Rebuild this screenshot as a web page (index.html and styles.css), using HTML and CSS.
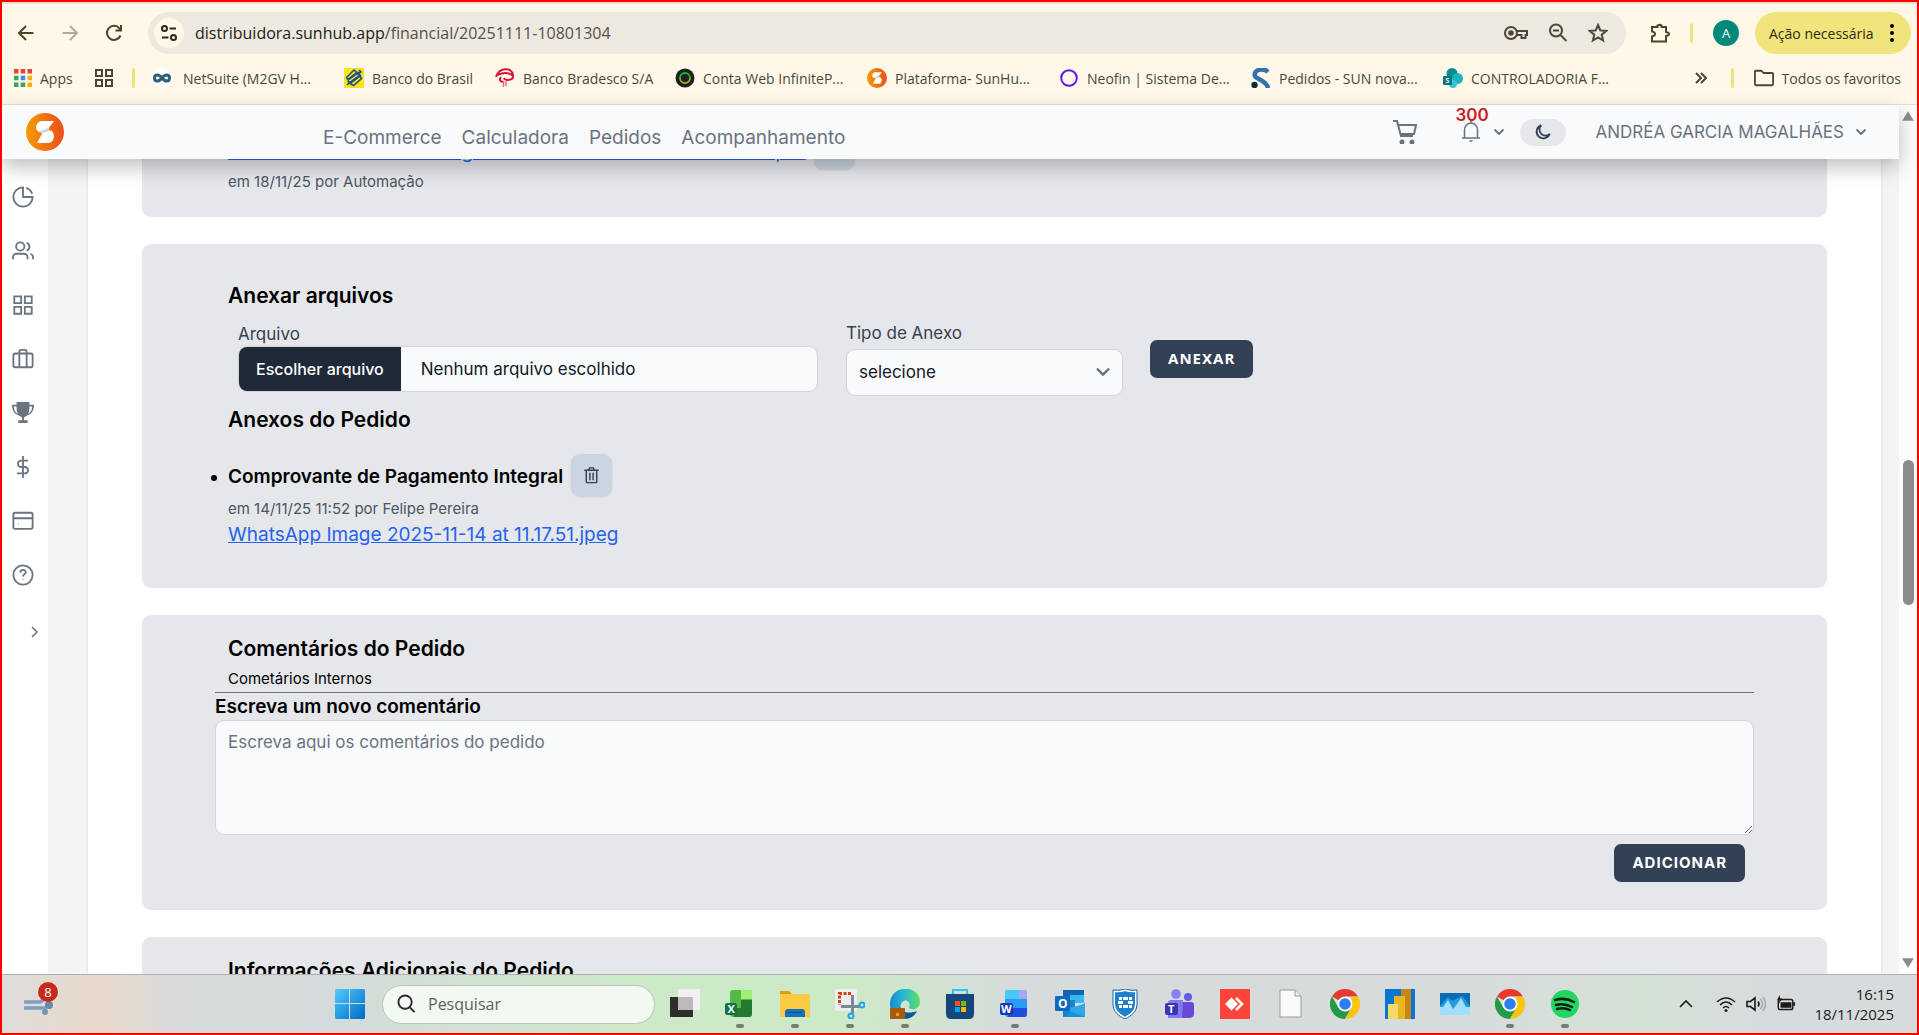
FILE: index.html
```html
<!DOCTYPE html>
<html lang="pt-BR">
<head>
  <meta charset="UTF-8">
  <meta name="viewport" content="width=device-width, initial-scale=1.0">
  <title>SunHub - Financeiro</title>
  <link rel="stylesheet" href="styles.css">
</head>
<body>
  <!-- Símbolos reutilizados -->
  <svg class="symbols" aria-hidden="true">
    <symbol id="i-chevron" viewBox="0 0 12 12"><path d="M2 4l4 4 4-4" fill="none" stroke="currentColor" stroke-width="1.8" stroke-linecap="round" stroke-linejoin="round"/></symbol>
    <symbol id="i-sun" viewBox="0 0 38 38">
      <defs><linearGradient id="sun-g"><stop offset="0" stop-color="#f59a00"/><stop offset="1" stop-color="#ea4f1d"/></linearGradient></defs>
      <circle cx="19" cy="19" r="19" fill="url(#sun-g)"/>
      <path d="M15 8h13l-8 11h-6c-5 0-6-9 1-11z" fill="#fff"/>
      <path d="M18 17h5c7 1 6 12 0 13H11z" fill="#fff"/>
      <path d="M22 15l-10 4 4 1 8-2z" fill="#d5d4e8"/>
    </symbol>
    <symbol id="i-chrome" viewBox="0 0 30 30">
      <path d="M15 15L2 7.500A15 15 0 0 1 28 7.500H15z" fill="#e33b2e"/>
      <path d="M2 7.500A15 15 0 0 0 15 30L21.500 18.750 15 15 8.500 18.750z" fill="#249a48"/>
      <path d="M28 7.500A15 15 0 0 1 15 30L21.500 18.750 21.500 7.500z" fill="#fdc40d"/>
      <circle cx="15" cy="15" r="7.500" fill="#fff"/><circle cx="15" cy="15" r="5.800" fill="#2f7cf0"/>
    </symbol>
    <symbol id="i-trash" viewBox="0 0 20 20"><path d="M3 5h14M7 5l1-2.500h4L13 5M4.500 5v12q0 1 1 1h9q1 0 1-1V5M8.300 8v7M11.700 8v7" fill="none" stroke="currentColor" stroke-width="1.500" stroke-linecap="round"/></symbol>
  </svg>

  <!-- Barra do navegador -->
  <header class="browser">
    <div class="toolbar">
      <button class="tool" aria-label="Voltar"><svg viewBox="0 0 20 20"><path d="M17.500 10H3M10 3l-7 7 7 7"/></svg></button>
      <button class="tool off" aria-label="Avançar"><svg viewBox="0 0 20 20"><path d="M2.500 10H17M10 3l7 7-7 7"/></svg></button>
      <button class="tool" aria-label="Recarregar"><svg viewBox="0 0 20 20"><path d="M16.500 12.500A7 7 0 1 1 15.500 5.500L17 7M17 2v5.500h-5.500"/></svg></button>
      <div class="omnibox">
        <span class="site"><svg viewBox="0 0 20 20"><circle cx="5.500" cy="5.500" r="2.500"/><path d="M10.500 5.500H17M3 14.500h6.500"/><circle cx="14.500" cy="14.500" r="2.500"/></svg></span>
        <div class="url">distribuidora.sunhub.app<span>/financial/20251111-10801304</span></div>
        <svg class="omni-icon wide" viewBox="0 0 24 20"><circle cx="7" cy="10" r="6"/><circle class="fill" cx="7" cy="10" r="1.800"/><path d="M13 8h10v4h-1.500v3h-4v-3H12.500"/></svg>
        <svg class="omni-icon" viewBox="0 0 20 20"><circle cx="8" cy="7.500" r="6"/><path d="M5 7.500h6M12.500 12l6 6"/></svg>
        <svg class="omni-icon" viewBox="0 0 20 20"><path d="M10 2l2.300 5.400 5.900.5-4.500 3.800 1.400 5.800L10 14.400l-5.100 3.100 1.400-5.800-4.500-3.800 5.900-.5z"/></svg>
      </div>
      <button class="tool ext" aria-label="Extensões"><svg viewBox="0 0 20 20"><path d="M2 4h5.500V2.500q2.500-1.500 4 0V4H16v5q3 .5 3 2t-3 2v5.500H2v-5q3-.5 3-2.500T2 8.500z"/></svg></button>
      <i class="sep"></i>
      <span class="avatar">A</span>
      <button class="update">Ação necessária <svg viewBox="0 0 4 20"><circle cx="2" cy="3" r="2"/><circle cx="2" cy="10" r="2"/><circle cx="2" cy="17" r="2"/></svg></button>
    </div>
    <nav class="bookmarks">
      <a href="#" class="apps"><svg viewBox="0 0 18 18"><path fill="#ea4335" d="M0 0h4.500v4.500H0zM6.700 0h4.500v4.500H6.700zM13.500 0H18v4.500h-4.500z"/><path fill="#34a853" d="M0 6.700h4.500v4.500H0zM0 13.500h4.500V18H0zM6.700 13.500h4.500V18H6.700z"/><path fill="#4285f4" d="M6.700 6.700h4.500v4.500H6.700z"/><path fill="#fbaf05" d="M13.500 6.700H18v4.500h-4.500zM13.500 13.500H18V18h-4.500z"/></svg>Apps</a>
      <svg class="grid-icon" viewBox="0 0 18 18"><path d="M1 1h6v6H1zM11 1h6v6h-6zM1 11h6v6H1zM11 11h6v6h-6z"/></svg>
      <i class="sep"></i>
      <a href="#" class="mark first"><svg viewBox="0 0 20 20"><circle cx="10" cy="10" r="10" fill="#fff"/><path d="M10 10C7 6 2.500 6 2.500 10s4.500 4 7.500 0 7.500-4 7.500 0-4.500 4-7.500 0z" fill="none" stroke="#2f5f7e" stroke-width="3"/></svg>NetSuite (M2GV H...</a>
      <a href="#" class="mark short"><svg viewBox="0 0 20 20"><path fill="#fbe122" d="M0 0h20v20H0z"/><path d="M10 2l3 2.500-9 7-1.500-2zM15 2l2 2-3 2M16 8l1.500 2.500-8 7L6 15.500zM3 17l2-2 11-8M4 12l11-8M3.500 13l3 2M13 5l4 3" fill="none" stroke="#1b5288" stroke-width="1.600"/></svg>Banco do Brasil</a>
      <a href="#" class="mark mid"><svg viewBox="0 0 20 20"><path d="M1 9C3 0 17-2 18 7c1 6-8 6-9 3M2 7c5-2 12-3 16 1M6 9c-3 4 1 5 3 5" fill="none" stroke="#d5163c" stroke-width="2"/><path d="M8.500 13v6M11 13v5" stroke="#e0708a" stroke-width="1.500"/></svg>Banco Bradesco S/A</a>
      <a href="#" class="mark"><svg viewBox="0 0 20 20"><circle cx="10" cy="10" r="9.500" fill="#1e1f1e"/><path d="M5 10a5 5 0 0 1 10 0" stroke="#10bd2d" fill="none" stroke-width="1.800"/><path d="M5 10a5 5 0 0 0 10 0" stroke="#9aae19" fill="none" stroke-width="1.800"/></svg>Conta Web InfiniteP...</a>
      <a href="#" class="mark"><svg viewBox="0 0 38 38"><use href="#i-sun"/></svg>Plataforma- SunHu...</a>
      <a href="#" class="mark"><svg viewBox="0 0 20 20"><circle cx="10" cy="10" r="7.800" fill="none" stroke="#6516ef" stroke-width="2"/></svg>Neofin | Sistema De...</a>
      <a href="#" class="mark"><svg viewBox="0 0 20 20"><path d="M17 4C12-1 2 2 4 8c1 3 12 5 13 12" fill="none" stroke="#3472ac" stroke-width="4.500"/><circle cx="3.500" cy="17" r="3.200" fill="#0a2748"/></svg>Pedidos - SUN nova...</a>
      <a href="#" class="mark"><svg viewBox="0 0 20 20"><circle cx="9" cy="5.500" r="5.500" fill="#0b8c95"/><circle cx="14.500" cy="10.500" r="5.500" fill="#1bb5be"/><circle cx="10" cy="16" r="4" fill="#37c6d0"/><rect y="8" width="9" height="9" rx="1" fill="#037680"/><text x="2.500" y="15" font-size="7" font-weight="700" fill="#fff">S</text></svg>CONTROLADORIA F...</a>
      <button class="more" aria-label="Mais favoritos"><svg viewBox="0 0 12 12"><path d="M1 1l5 5-5 5M6 1l5 5-5 5"/></svg></button>
      <i class="sep"></i>
      <a href="#" class="folder"><svg viewBox="0 0 22 18"><path d="M1 16V2q0-1 1-1h6l2.500 2.500H20q1 0 1 1V16q0 1-1 1H2q-1 0-1-1z" fill="none" stroke="#4b4738" stroke-width="2"/></svg>Todos os favoritos</a>
    </nav>
  </header>

  <div class="viewport">
    <div class="app">
      <!-- Cabeçalho do sistema -->
      <header class="app-header">
        <a href="#" class="logo" aria-label="SunHub"><svg viewBox="0 0 38 38"><use href="#i-sun"/></svg></a>
        <nav class="menu">
          <a href="#">E-Commerce</a>
          <a href="#">Calculadora</a>
          <a href="#">Pedidos</a>
          <a href="#">Acompanhamento</a>
        </nav>
        <button class="cart" aria-label="Carrinho"><svg viewBox="0 0 24 24"><path d="M0 1h4l4 15h12M5 5h18l-2 9H7"/><circle class="fill" cx="9" cy="22" r="1.500"/><circle class="fill" cx="19" cy="22" r="1.500"/></svg></button>
        <button class="bell" aria-label="Notificações">
          <span class="count">300</span>
          <svg viewBox="0 0 20 22"><path d="M1 17h18M3.500 17V9a6.500 7 0 0 1 13 0v8M10 2V0M8.500 20h3"/></svg>
          <svg class="chev" viewBox="0 0 12 12"><use href="#i-chevron"/></svg>
        </button>
        <button class="theme" aria-label="Tema escuro"><svg viewBox="0 0 20 20"><path d="M8 2.500A7.500 7.500 0 1 0 17.500 12 6.500 6.500 0 0 1 8 2.500z"/></svg></button>
        <button class="user">ANDRÉA GARCIA MAGALHÃES <svg class="chev" viewBox="0 0 12 12"><use href="#i-chevron"/></svg></button>
      </header>

      <div class="app-body">
        <aside class="sidebar">
          <a href="#" aria-label="Painel"><svg viewBox="0 0 24 24"><path d="M12 1.500A10.500 10.500 0 1 0 22.500 12H12zM15.500 2a10.500 10.500 0 0 1 6.500 6.500"/></svg></a>
          <a href="#" aria-label="Clientes"><svg viewBox="0 0 24 24"><circle cx="9" cy="7" r="4.500"/><path d="M1 21v-2a4 4 0 0 1 4-4h8a4 4 0 0 1 4 4v2M16 3a4.500 4.500 0 0 1 0 8.500M20 15q3 1 3 4v2"/></svg></a>
          <a href="#" aria-label="Módulos"><svg viewBox="0 0 24 24"><path d="M2.500 2.500h7.500v7.500H2.500zM14 2.500h7.500v7.500H14zM2.500 14h7.500v7.500H2.500zM14 14h7.500v7.500H14z"/></svg></a>
          <a href="#" aria-label="Negócios"><svg viewBox="0 0 24 24"><rect x="1.500" y="6" width="21" height="15" rx="2"/><path d="M8 21V4q0-2 2-2h4q2 0 2 2v17"/></svg></a>
          <a href="#" aria-label="Ranking"><svg viewBox="0 0 24 24"><path class="fill" d="M5 0h14v3h5c0 7-3 10-8 12-1 1-2.500 1.500-3 2v3h4v3H7v-3h4v-3c-.5-.5-2-1-3-2C3 13 0 10 0 3h5zM2 5c0 4 2 7 4.500 8C5 10 5 8 5 5zm20 0h-3c0 3 0 5-1.500 8C20 12 22 9 22 5z" stroke="none"/></svg></a>
          <a href="#" aria-label="Financeiro"><svg viewBox="0 0 24 24"><path d="M12 0v24M17.500 5H10a3.500 3.500 0 0 0 0 7h4a3.500 3.500 0 0 1 0 7H5.500"/></svg></a>
          <a href="#" aria-label="Pagamentos"><svg viewBox="0 0 24 24"><rect x="1.500" y="3" width="21" height="17.500" rx="2"/><path d="M1.500 9h21M6.500 15h.5"/></svg></a>
          <a href="#" aria-label="Ajuda"><svg viewBox="0 0 24 24"><circle cx="12" cy="12" r="10.500"/><path d="M9 9.500c0-4 6-4 6-.5 0 2.500-3 2-3 4.500M12 17v.5"/></svg></a>
          <button class="expand" aria-label="Expandir menu"><svg viewBox="0 0 12 12"><path d="M4 1l5 5-5 5"/></svg></button>
        </aside>

        <main class="content">
          <section class="card previous">
            <div class="attachment-line">
              <a href="#" class="file-link">Nota Fiscal Eletronica Integral 20251111-10801304 Venda Sol.pdf</a>
              <button class="trash" aria-label="Excluir"><svg viewBox="0 0 20 20"><use href="#i-trash"/></svg></button>
            </div>
            <p class="meta">em 18/11/25 por Automação</p>
          </section>

          <section class="card attach">
            <h3>Anexar arquivos</h3>
            <form class="attach-form">
              <div class="field file-field">
                <label for="arquivo">Arquivo</label>
                <label class="file-box" for="arquivo">
                  <span class="file-button">Escolher arquivo</span>
                  <span class="file-name">Nenhum arquivo escolhido</span>
                  <input type="file" id="arquivo">
                </label>
              </div>
              <div class="field type-field">
                <label for="tipo">Tipo de Anexo</label>
                <div class="select-box">
                  <select id="tipo"><option>selecione</option></select>
                  <svg viewBox="0 0 12 12"><use href="#i-chevron"/></svg>
                </div>
              </div>
              <button type="button" class="btn btn-attach">Anexar</button>
            </form>
            <h3>Anexos do Pedido</h3>
            <ul class="files">
              <li>
                <div class="attachment-line">
                  <strong>Comprovante de Pagamento Integral</strong>
                  <button class="trash" aria-label="Excluir"><svg viewBox="0 0 20 20"><use href="#i-trash"/></svg></button>
                </div>
                <p class="meta">em 14/11/25 11:52 por Felipe Pereira</p>
                <a href="#" class="file-link">WhatsApp Image 2025-11-14 at 11.17.51.jpeg</a>
              </li>
            </ul>
          </section>

          <section class="card comments">
            <h2>Comentários do Pedido</h2>
            <p class="sub">Cometários Internos</p>
            <div class="new-comment">
              <label for="comentario">Escreva um novo comentário</label>
              <textarea id="comentario" placeholder="Escreva aqui os comentários do pedido"></textarea>
              <button type="button" class="btn">Adicionar</button>
            </div>
          </section>

          <section class="card extra">
            <h2>Informações Adicionais do Pedido</h2>
          </section>
        </main>
      </div>
    </div>
    <!-- Barra de rolagem -->
    <div class="scrollbar">
      <svg viewBox="0 0 12 10"><path d="M6 1l5 8H1z"/></svg>
      <div class="track"><div class="thumb"></div></div>
      <svg viewBox="0 0 12 10"><path d="M6 9L1 1h10z"/></svg>
    </div>
  </div>

  <!-- Barra de tarefas -->
  <footer class="taskbar">
    <div class="weather">
      <svg viewBox="0 0 30 24"><path d="M1 10h15q4-1 2-6M1 16h20v4" fill="none" stroke="#7e9fc4" stroke-width="3.500" stroke-linecap="round"/><circle cx="25" cy="13" r="4" fill="#6689ae"/><circle cx="21" cy="20" r="3" fill="#7295b9"/></svg>
      <span class="badge">8</span>
    </div>
    <div class="tasks">
      <button class="task start" aria-label="Iniciar"><svg viewBox="0 0 30 30"><defs><linearGradient id="win" x2="1" y2="1"><stop stop-color="#4ccdfd"/><stop offset="1" stop-color="#0069c9"/></linearGradient></defs><path fill="url(#win)" d="M1 0h13v14H0V1zM15 0h14l1 1v13H15zM0 15h14v15H1l-1-1zM15 15h15v14l-1 1H15z"/></svg></button>
      <label class="search"><svg viewBox="0 0 20 20"><circle cx="8.500" cy="8" r="7"/><path d="M13.500 13.500l5 5"/></svg><input type="text" placeholder="Pesquisar" aria-label="Pesquisar"></label>
      <button class="task" aria-label="Visão de tarefas"><svg viewBox="0 0 30 30"><path fill="#302e2d" d="M0 8h23v20H0z"/><path fill="#f1f1f1" d="M8 0h22v21H8z"/><path fill="#bababa" d="M8 8h15v13H8z"/></svg></button>
      <button class="task on" aria-label="Excel"><svg viewBox="0 0 30 30"><rect x="5" y="1" width="22" height="27" rx="3" fill="#55b947"/><path fill="#a3ec75" d="M16 1h8q3 0 3 3v6H16z"/><path fill="#237a31" d="M16 11h11v14q0 3-3 3H9V19h7z"/><rect y="14" width="12" height="12" rx="2" fill="#107341"/><text x="2.500" y="24" font-size="11" font-weight="700" fill="#fff">X</text></svg></button>
      <button class="task on" aria-label="Explorador de arquivos"><svg viewBox="0 0 30 30"><path fill="#e19d05" d="M0 2h9l3 3h8v6H0z"/><rect y="5" width="30" height="23" rx="1" fill="#fdca43"/><path fill="#1173bd" d="M5 28v-5q0-3 3-3h14q3 0 3 3v5z"/><path fill="#07508a" d="M8 23h14v1H8z"/></svg></button>
      <button class="task on" aria-label="Captura"><svg viewBox="0 0 30 30"><rect width="22" height="22" rx="2" fill="#eeedf3"/><path d="M16 4.500H4.500V16" fill="none" stroke="#d4400d" stroke-width="3" stroke-dasharray="3 1.500"/><path d="M17.500 6v18M6 17.500h18" stroke="#7b8995" stroke-width="3"/><circle cx="27" cy="16" r="2.500" fill="none" stroke="#29a0e5" stroke-width="2"/><circle cx="16" cy="27" r="2.500" fill="none" stroke="#29a0e5" stroke-width="2"/></svg></button>
      <button class="task on" aria-label="Edge"><svg viewBox="0 0 30 30"><defs><linearGradient id="edge"><stop stop-color="#168bd1"/><stop offset=".5" stop-color="#2cbdcc"/><stop offset="1" stop-color="#5be05c"/></linearGradient></defs><path fill="url(#edge)" d="M0 15C0-5 30-5 30 13c0 7-8 9-11 6 3-9-8-11-9 0L6 28C2 25 0 20 0 15z"/><path fill="#0b559b" d="M10 16c0 8 9 9 17 6-4 9-14 9-19 6z"/><path fill="#a75c0e" d="M0 19h15v11H0z"/><path fill="#f0a21d" d="M6 24h3v3H6z"/></svg></button>
      <button class="task" aria-label="Store"><svg viewBox="0 0 30 30"><path d="M8 6V1h14v5" fill="none" stroke="#2fc0f4" stroke-width="2"/><path fill="#13477e" d="M1 5h28v20q0 5-5 5H6q-5 0-5-5z"/><path fill="#f25022" d="M10 12h5v5h-5z"/><path fill="#7fba00" d="M16 12h5v5h-5z"/><path fill="#00a4ef" d="M10 18h5v5h-5z"/><path fill="#ffb900" d="M16 18h5v5h-5z"/></svg></button>
      <button class="task on" aria-label="Word"><svg viewBox="0 0 30 30"><rect x="5" y="1" width="22" height="27" rx="3" fill="#2a9bf4"/><path fill="#45c8fb" d="M8 1h11v9H5V4q0-3 3-3z"/><path fill="#a8a5f5" d="M19 1h5q3 0 3 3v6h-8z"/><path fill="#1f4fe2" d="M8 19h19v6q0 3-3 3H8z"/><rect y="14" width="13" height="12" rx="2" fill="#173ab4"/><text x="1" y="24" font-size="11" font-weight="700" fill="#fff">W</text></svg></button>
      <button class="task" aria-label="Outlook"><svg viewBox="0 0 30 30"><path fill="#1066b5" d="M8 1h21v10H8z"/><path fill="#35b9f1" d="M15 6h14v8H15z"/><path fill="#1683d5" d="M8 11h12v17H8z"/><path fill="#1a92df" d="M8 28l22-14v14z"/><path fill="#31a7eb" d="M9 20l21 8V15z"/><rect y="7" width="15" height="15" rx="1" fill="#0f6cbd"/><text x="3" y="19" font-size="12" font-weight="700" fill="#fff">O</text></svg></button>
      <button class="task" aria-label="FortiClient"><svg viewBox="0 0 30 30"><path d="M15 1q6 2 11 1v13c0 7-5 11-11 14C9 26 4 22 4 15V2q5 1 11-1z" fill="#1c80d0" stroke="#fff" stroke-width="2"/><path d="M15 0q6 2 12 1v14c0 8-6 12-12 15C9 27 3 23 3 15V1q6 1 12-1z" fill="none" stroke="#1760a4"/><path fill="#fff" d="M9 8h3v3H9zM13 8h5v3h-5zM19 8h3v3h-3zM8 12h5v3H8zM18 12h5v3h-5zM9 16h3v3H9zM13 16h5v3h-5zM19 16h3v3h-3z"/></svg></button>
      <button class="task" aria-label="Teams"><svg viewBox="0 0 30 30"><circle cx="11" cy="5" r="4.800" fill="#8581f4"/><circle cx="23" cy="8" r="4" fill="#615bed"/><path fill="#827bf0" d="M3 29V14q0-3 3-3h12v18z"/><path fill="#6a49d9" d="M18 13h8q3 0 3 3v9q0 4-5 4h-7z"/><rect y="14" width="13" height="12" rx="2" fill="#3a36b2"/><text x="3" y="24" font-size="11" font-weight="700" fill="#fff">T</text></svg></button>
      <button class="task" aria-label="AnyDesk"><svg viewBox="0 0 30 30"><path fill="#fc4538" d="M0 0h30v30H0z"/><path fill="#fff" d="M5 15l6.500-6.500L18 15l-6.500 6.500z"/><path d="M16 9l6 6-6 6" fill="none" stroke="#fff" stroke-width="2.500"/></svg></button>
      <button class="task" aria-label="Documento"><svg viewBox="0 0 30 30"><path d="M5 1h15l6 6v21H5z" fill="#fafafa" stroke="#999"/><path d="M20 1v6h6" fill="#eee" stroke="#999"/></svg></button>
      <button class="task" aria-label="Chrome"><svg viewBox="0 0 30 30"><use href="#i-chrome"/></svg></button>
      <button class="task" aria-label="Power BI"><svg viewBox="0 0 30 30"><path fill="#0875d1" d="M0 0h30v30H0z"/><path fill="#c58716" d="M16 0h10v30H16z"/><path fill="#ebb720" d="M9 7h11v23H9z"/><path fill="#f5da67" d="M3 15h10v15H3z"/></svg></button>
      <button class="task" aria-label="Monitor"><svg viewBox="0 0 30 30"><path fill="#096cba" d="M0 4h30v22H0z"/><path fill="#299bd9" d="M0 17l8-9 4 4 4-2 6-3 8 10v9H0z"/><path fill="#a0dfff" d="M0 18h3l5-7 5 9 4-5 4-6 5 9h4v8H0z"/></svg></button>
      <button class="task on" aria-label="Chrome"><svg viewBox="0 0 30 30"><use href="#i-chrome"/></svg></button>
      <button class="task on" aria-label="Spotify"><svg viewBox="0 0 30 30"><circle cx="15" cy="15" r="14" fill="#1ed660"/><path d="M5 11q10-3 19 2M6 16q8-2 16 2M7 20q7-2 13 1" fill="none" stroke="#101c14" stroke-width="2.500" stroke-linecap="round"/></svg></button>
    </div>
    <div class="tray">
      <svg class="up" viewBox="0 0 14 14"><path d="M1 10l6-6 6 6"/></svg>
      <svg viewBox="0 0 20 20"><path d="M1 8q9-8 18 0M4 11q6-6 12 0M7 14q3-3 6 0"/><circle class="fill" cx="10" cy="16.500" r="1.500"/></svg>
      <svg viewBox="0 0 20 20"><path d="M1 7.500h3.500L9 4v12l-4.500-3.500H1zM12 7.500q2 2.500 0 5"/><path class="dim" d="M14.500 5q4 5 0 10M17 3q5 7 0 14"/></svg>
      <svg viewBox="0 0 22 20"><rect x="2.500" y="5" width="16" height="11" rx="2"/><path class="fill" d="M5 8h12v6H5zM19 8h2v4h-2zM4 0L1 6h3L3 10l4-6H4.500z"/></svg>
      <div class="clock"><time>16:15</time><time>18/11/2025</time></div>
    </div>
  </footer>
</body>
</html>
```
FILE: styles.css
```css
* {
  box-sizing: border-box;
}
body {
  margin: 0;
  height: 100vh;
  display: flex;
  flex-direction: column;
  border: 2px solid #ff0000;
  overflow: hidden;
  font-family: Inter, "Liberation Sans", sans-serif;
  color: #000;
}
button {
  padding: 0;
  border: none;
  background: none;
  font-family: inherit;
  color: inherit;
  cursor: pointer;
}
a {
  color: inherit;
  text-decoration: none;
}
h2, h3, p, ul {
  margin: 0;
}
svg {
  display: block;
  flex: none;
}
.symbols {
  position: absolute;
  width: 0;
  height: 0;
}

/* Navegador */
.browser {
  flex: none;
  height: 103px;
  background: #fff8e9;
  border-top: 2px solid #ede2c8;
  border-bottom: 1px solid #e9e1c6;
  font-family: "Open Sans", "Noto Sans", sans-serif;
  color: #4b4738;
}
.toolbar {
  display: flex;
  align-items: center;
  height: 58px;
  padding: 0 6px 0 14px;
}
.tool {
  width: 20px;
  margin-right: 24px;
}
.tool svg {
  width: 20px;
  height: 20px;
  fill: none;
  stroke: #4b4529;
  stroke-width: 2;
}
.tool.off svg {
  stroke: #b0ab9a;
}
.omnibox {
  flex: 1;
  display: flex;
  align-items: center;
  height: 42px;
  padding: 0 18px 0 6px;
  border-radius: 21px;
  background: #ede8e0;
}
.site {
  width: 30px;
  height: 30px;
  padding: 5px;
  border-radius: 50%;
  background: #fff8e9;
}
.site svg {
  fill: none;
  stroke: #2b291e;
  stroke-width: 2;
}
.url {
  flex: 1;
  margin-left: 11px;
  font-size: 16px;
  color: #201e14;
}
.url span {
  color: #55524a;
}
.omni-icon {
  width: 20px;
  height: 20px;
  margin-left: 20px;
  fill: none;
  stroke: #4b4738;
  stroke-width: 2;
}
.omni-icon.wide {
  width: 24px;
}
.fill {
  fill: currentColor;
}
.tool.ext {
  margin: 0 20px 0 24px;
}
.sep {
  width: 3px;
  height: 20px;
  border-radius: 2px;
  background: #f1e37c;
}
.avatar {
  width: 26px;
  height: 26px;
  margin: 0 16px 0 20px;
  border-radius: 50%;
  background: #00897b;
  color: #fff;
  font-size: 13px;
  line-height: 26px;
  text-align: center;
}
.update {
  display: flex;
  align-items: center;
  justify-content: space-between;
  width: 156px;
  height: 42px;
  padding: 0 17px 0 14px;
  border-radius: 21px;
  background: #f2e47c;
  color: #2e2a12;
  font-size: 14px;
}
.update svg {
  width: 4px;
  height: 20px;
}
.bookmarks {
  display: flex;
  align-items: center;
  height: 32px;
  padding: 0 16px 0 12px;
  font-size: 14px;
  white-space: nowrap;
}
.bookmarks a {
  display: flex;
  align-items: center;
  gap: 8px;
}
.apps {
  width: 81px;
}
.apps svg {
  width: 18px;
  height: 18px;
}
.grid-icon {
  width: 18px;
  height: 18px;
  margin-right: 19px;
  fill: none;
  stroke: #4b4738;
  stroke-width: 2;
}
.mark {
  width: 192px;
}
.mark.first {
  margin-left: 17px;
}
.bookmarks .mark.first {
  gap: 11px;
}
.mark.short {
  width: 151px;
}
.mark.mid {
  width: 180px;
}
.mark svg {
  width: 20px;
  height: 20px;
}
.more {
  margin-left: auto;
  margin-right: 24px;
}
.more svg {
  width: 12px;
  height: 12px;
  fill: none;
  stroke: #4b4738;
  stroke-width: 2;
}
.folder {
  margin-left: 20px;
}
.folder svg {
  width: 20px;
  height: 18px;
}

/* Área da página */
.viewport {
  flex: 1;
  min-height: 0;
  display: flex;
}
.app {
  flex: 1;
  display: flex;
  flex-direction: column;
  min-width: 0;
  background: #f3f4f6;
}
.app-header {
  position: relative;
  z-index: 2;
  flex: none;
  display: flex;
  align-items: center;
  height: 54px;
  padding: 0 32px 0 24px;
  background: #f9fafc;
  box-shadow: 0 8px 20px rgba(0, 0, 0, 0.25);
  color: #6b7280;
}
.logo svg {
  width: 38px;
  height: 38px;
}
.menu {
  flex: 1;
  display: flex;
  gap: 20px;
  margin-left: 259px;
  padding-top: 10px;
  font-size: 19px;
}
.cart svg, .bell svg, .theme svg {
  width: 24px;
  height: 24px;
  fill: none;
  stroke: currentColor;
  stroke-width: 2;
}
.bell {
  position: relative;
  display: flex;
  align-items: center;
  gap: 10px;
  margin: 0 15px 0 42px;
}
.bell svg {
  height: 22px;
  stroke-width: 1.5;
}
.bell .chev, .user .chev {
  width: 12px;
  height: 12px;
}
.count {
  position: absolute;
  left: -4px;
  top: -16px;
  color: #c81e1e;
  font-size: 17px;
  font-weight: 600;
}
.theme {
  display: flex;
  align-items: center;
  justify-content: center;
  width: 46px;
  height: 27px;
  border-radius: 14px;
  background: #e5e7eb;
  color: #334155;
}
.theme svg {
  width: 18px;
  height: 18px;
}
.user {
  display: flex;
  align-items: center;
  gap: 11px;
  margin-left: 29px;
  font-size: 17px;
}
.app-body {
  flex: 1;
  min-height: 0;
  display: flex;
  overflow: hidden;
}
.sidebar {
  flex: none;
  display: flex;
  flex-direction: column;
  align-items: center;
  gap: 32px;
  width: 46px;
  padding: 27px 4px 0 0;
  background: #fff;
  color: #6b7280;
}
.sidebar svg {
  width: 22px;
  height: 22px;
  fill: none;
  stroke: currentColor;
  stroke-width: 2;
}
.sidebar .fill {
  fill: currentColor;
}
.expand {
  align-self: flex-end;
  margin: 8px 4px 0 0;
}
.sidebar .expand svg {
  width: 12px;
  height: 12px;
  stroke-width: 1.5;
}
.content {
  flex: 1;
  display: flex;
  flex-direction: column;
  gap: 27px;
  margin: 0 18px 0 40px;
  padding: 0 54px;
  background: #fff;
  box-shadow: 0 0 3px rgba(0, 0, 0, 0.12);
}
.card {
  flex: none;
  border-radius: 9px;
  background: #e5e7eb;
}
.card.previous {
  height: 90px;
  margin-top: -32px;
  padding-left: 86px;
}
.attachment-line {
  display: flex;
  align-items: center;
  gap: 8px;
  height: 42px;
}
.trash {
  display: flex;
  align-items: center;
  justify-content: center;
  width: 41px;
  height: 42px;
  border-radius: 9px;
  background: #cbd5e1;
  color: #334155;
  box-shadow: 0 1px 2px rgba(0, 0, 0, 0.12);
}
.trash svg {
  width: 19px;
  height: 20px;
}
.file-link {
  color: #2563eb;
  font-size: 19px;
  line-height: 28px;
  text-decoration: underline;
}
.attachment-line .file-link {
  padding-top: 8px;
}
.meta {
  color: #4b5563;
  font-size: 15px;
  line-height: 24px;
}
.previous .meta, .files .meta {
  margin-top: 1px;
}
.attach {
  height: 344px;
  padding: 38px 0 0 86px;
}
.attach h3 {
  font-size: 21px;
  font-weight: 600;
  line-height: 28px;
}
.attach-form {
  display: flex;
  align-items: flex-start;
  height: 96px;
  padding: 12px 0 0 10px;
  font-size: 17px;
}
.field {
  display: flex;
  flex-direction: column;
  line-height: 24px;
  color: #374151;
}
.file-field {
  width: 580px;
  margin-right: 28px;
}
.file-box {
  display: flex;
  height: 46px;
  border: 1px solid #d1d5db;
  border-radius: 9px;
  background: #f9fafc;
  color: #111827;
  line-height: 44px;
  overflow: hidden;
}
.file-button {
  padding: 0 17px;
  background: #1f2937;
  color: #fff;
  font-size: 16px;
  font-weight: 500;
}
.file-name {
  padding-left: 20px;
}
.file-box input {
  width: 1px;
  height: 1px;
  opacity: 0;
}
.type-field {
  width: 277px;
  margin-right: 27px;
  gap: 5px;
  line-height: 22px;
}
.select-box {
  position: relative;
}
.select-box select {
  width: 100%;
  height: 47px;
  padding: 0 12px 2px;
  border: 1px solid #d1d5db;
  border-radius: 9px;
  background: #f9fafc;
  color: #111827;
  font-family: inherit;
  font-size: 17px;
  appearance: none;
}
.select-box svg {
  position: absolute;
  right: 12px;
  top: 15px;
  width: 16px;
  height: 16px;
  color: #6b7280;
  pointer-events: none;
}
.btn {
  height: 38px;
  padding: 0 18px 2px;
  border-radius: 7px;
  background: #334155;
  color: #fff;
  font-size: 15px;
  font-weight: 700;
  letter-spacing: 1px;
  text-transform: uppercase;
}
.btn-attach {
  margin-top: 18px;
  font-family: "Noto Sans", sans-serif;
}
.files {
  margin-top: 20px;
  padding: 0;
  list-style: none;
}
.files li {
  position: relative;
}
.files li::before {
  content: "";
  position: absolute;
  left: -17px;
  top: 21px;
  width: 6px;
  height: 6px;
  border-radius: 50%;
  background: #000;
}
.files strong {
  padding-top: 2px;
  font-size: 19px;
  font-weight: 600;
}
.comments {
  height: 295px;
  padding: 18px 73px 0;
}
.comments h2, .extra h2 {
  padding-left: 13px;
  font-size: 21px;
  font-weight: 600;
  line-height: 32px;
}
.sub {
  padding-left: 13px;
  font-size: 15px;
  line-height: 27px;
}
.new-comment {
  display: flex;
  flex-direction: column;
  border-top: 1px solid #6b7280;
}
.new-comment label {
  font-size: 19px;
  font-weight: 600;
  line-height: 27px;
}
.new-comment textarea {
  height: 115px;
  padding: 9px 12px;
  border: 1px solid #d1d5db;
  border-radius: 9px;
  background: #f9fafc;
  font-family: inherit;
  font-size: 17px;
  line-height: 24px;
}
.new-comment textarea::placeholder {
  color: #6b7280;
}
.new-comment .btn {
  align-self: flex-end;
  margin: 9px 9px 0 0;
}
.extra {
  height: 200px;
  padding: 18px 73px 0;
}
.scrollbar {
  flex: none;
  display: flex;
  flex-direction: column;
  align-items: center;
  justify-content: space-between;
  width: 18px;
  padding: 5px 0;
  background: #fcfcfc;
}
.scrollbar svg {
  width: 14px;
  height: 12px;
  fill: #8b8b8b;
}
.track {
  flex: 1;
  padding-top: 338px;
}
.thumb {
  width: 11px;
  height: 145px;
  border-radius: 6px;
  background: #8b8b8b;
}

/* Barra de tarefas */
.taskbar {
  flex: none;
  display: grid;
  grid-template-columns: 1fr auto 1fr;
  align-items: center;
  height: 59px;
  border-top: 1px solid #adb0ad;
  background: linear-gradient(90deg, #dedddb 0%, #ead9ca 5%, #d8dbda 9%, #d5dadc 16%, #cfe5cf 28%, #cdeac8 34%, #cdeac8 44%, #d7dbdb 53%, #d8dbdc 75%, #d4e1d5 86%, #d8dbde 92%, #d8dbdc 100%);
  font-family: "Open Sans", "Noto Sans", sans-serif;
  color: #1b1b1b;
}
.weather {
  position: relative;
  width: 30px;
  margin-left: 22px;
}
.weather svg {
  width: 30px;
  height: 24px;
}
.badge {
  position: absolute;
  left: 14px;
  top: -10px;
  width: 20px;
  height: 20px;
  border-radius: 50%;
  background: #c42b1c;
  color: #fff;
  font-size: 13px;
  line-height: 20px;
  text-align: center;
}
.tasks {
  display: flex;
  align-items: center;
  gap: 25px;
  padding-right: 4px;
}
.task {
  position: relative;
}
.task svg {
  width: 30px;
  height: 30px;
  font-family: "Open Sans", sans-serif;
}
.task.start {
  margin-right: -8px;
}
.task.on::after {
  content: "";
  position: absolute;
  left: 11px;
  bottom: -9px;
  width: 8px;
  height: 4px;
  border-radius: 2px;
  background: #767b76;
}
.search {
  display: flex;
  align-items: center;
  gap: 12px;
  width: 273px;
  height: 39px;
  margin-right: -10px;
  padding: 0 14px;
  border: 1px solid #b5c8b5;
  border-radius: 20px;
  background: #f3f8f2;
}
.search svg {
  width: 19px;
  height: 20px;
  fill: none;
  stroke: #2a2a2a;
  stroke-width: 2;
}
.search input {
  width: 100%;
  padding: 0;
  border: none;
  background: none;
  font-family: inherit;
  font-size: 16px;
}
.search input::placeholder {
  color: #5d615d;
}
.tray {
  display: flex;
  align-items: center;
  justify-content: flex-end;
  gap: 10px;
  padding-right: 23px;
}
.tray svg {
  width: 20px;
  height: 20px;
  fill: none;
  stroke: #1b1b1b;
  stroke-width: 1.6;
}
.tray .up {
  width: 14px;
  height: 14px;
  margin-right: 13px;
}
.tray .fill {
  fill: #1b1b1b;
  stroke: none;
}
.tray .dim {
  stroke: #abadab;
}
.clock {
  display: flex;
  flex-direction: column;
  margin-left: 8px;
  font-size: 15px;
  line-height: 20px;
  text-align: right;
}
```
